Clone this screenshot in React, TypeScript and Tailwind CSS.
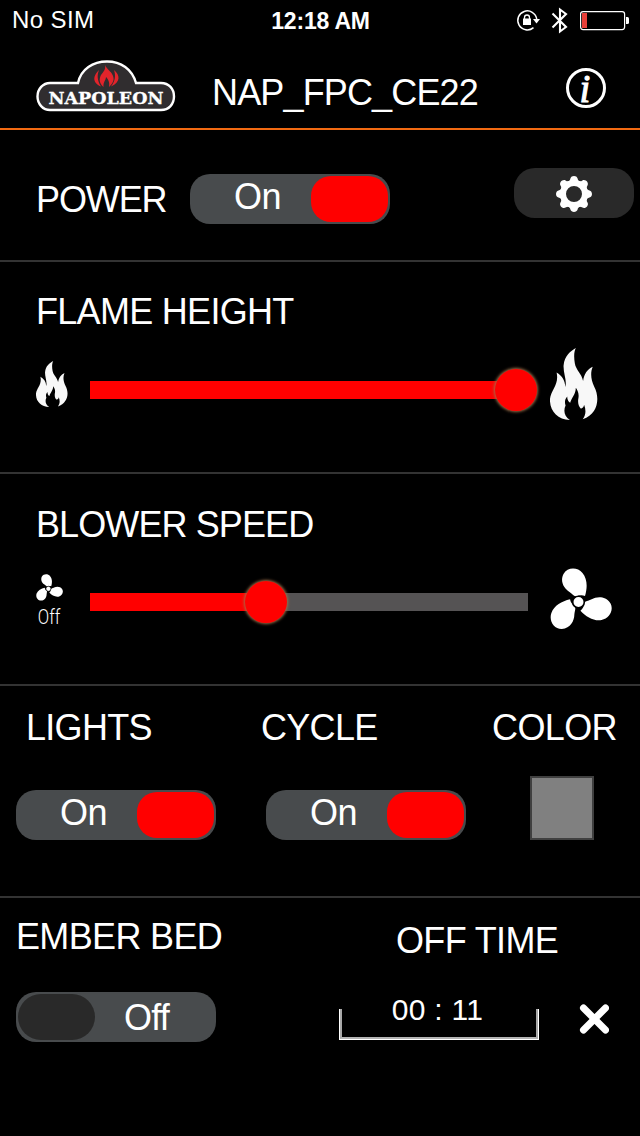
import { useState } from 'react';
import type { ReactNode } from 'react';
import clsx from 'clsx';

function Label({ children, className }: { children: ReactNode; className?: string }) {
  return (
    <div className={clsx('text-[36px] leading-[36px] whitespace-nowrap', className)}>
      {children}
    </div>
  );
}

function Toggle({ initial }: { initial: boolean }) {
  const [on, setOn] = useState(initial);

  return (
    <button
      onClick={() => setOn(!on)}
      className={clsx(
        'flex h-[50px] w-[200px] shrink-0 items-center rounded-[20px] bg-[#484b4d] p-0.5',
        !on && 'flex-row-reverse'
      )}
    >
      <span
        className={clsx(
          'flex-1 text-center text-[36px] leading-[36px]',
          on ? 'pb-1 pl-3 tracking-[-0.5px]' : 'pt-0.5 pr-4 tracking-[-0.8px]'
        )}
      >
        {on ? 'On' : 'Off'}
      </span>
      <span
        className={clsx(
          'h-[46px] w-[77px]',
          on ? 'rounded-[20px] bg-[#ff0000]' : 'rounded-[23px] bg-[#292929]'
        )}
      />
    </button>
  );
}

function Slider({ value }: { value: number }) {
  return (
    <div className="relative h-[18px] w-[438px] bg-[#555354]">
      <div className="h-full bg-[#ff0000]" style={{ width: `${value}px` }} />
      <div
        className="absolute -top-3 size-[42px] -translate-x-1/2 rounded-full bg-[#ff0000] shadow-[0_0_3px_1px_#a0704a]"
        style={{ left: `${value}px` }}
      />
    </div>
  );
}

function Flame({ className }: { className?: string }) {
  return (
    <svg viewBox="240 55 145 214" preserveAspectRatio="none" fill="#f8f8f8" className={className}>
      <path d="M318 55C312 66 312 83 315 100C318 120 336 131 340 153C343 132 353 118 369 111C361 130 364 151 374 171C391 203 386 251 339 267C349 252 349 239 343 224C342 232 337 236 332 234C326 228 323 215 326 203C328 190 323 179 318 173C318 192 304 205 301 218C295 215 292 207 292 199C284 208 284 217 287 226C280 241 283 258 300 269C262 268 238 241 240 206C243 180 268 164 260 128C276 137 286 152 286 171C292 152 280 131 281 107C284 77 302 65 318 55Z" />
    </svg>
  );
}

function Fan({ className }: { className?: string }) {
  const blade = 'M6.5 -6C9 -14 9 -23 4 -29C-1 -35 -11 -35 -15 -28C-19 -20 -14 -13 -9 -10C-6 -8 -4 -5 -2 -5.5C1 -7 4 -7 6.5 -6Z';

  return (
    <svg viewBox="-28.5 -34 62 62" fill="white" className={className}>
      <path d={blade} />
      <path d={blade} transform="rotate(120)" />
      <path d={blade} transform="rotate(240)" />
      <circle r="5.8" stroke="black" strokeWidth="1.6" />
    </svg>
  );
}

function Gear() {
  return (
    <svg viewBox="-18 -18 36 36" className="size-9 fill-white">
      <circle r="11" fill="none" stroke="white" strokeWidth="6" />
      {[0, 45, 90, 135, 180, 225, 270, 315].map((angle) => (
        <path
          key={angle}
          transform={`rotate(${angle})`}
          d="M-6.5 -12C-4.8 -13 -4 -13.5 -3.6 -15.5C-2.8 -18.8 2.8 -18.8 3.6 -15.5C4 -13.5 4.8 -13 6.5 -12Z"
        />
      ))}
    </svg>
  );
}

function Logo() {
  return (
    <svg viewBox="36 60 140 52" className="h-[52px] w-[140px]">
      <path
        d="M50 83H78C81 69 93 61.5 107 61.5C121 61.5 132 69 136 83H161C169 83 174 89 174 96.5C174 104 169 110 161 110H50C43 110 37.500 104 37.500 96.5C37.500 89 43 83 50 83Z"
        fill="#302d2f"
        stroke="white"
        strokeWidth="2.4"
      />
      <path
        d="M105 65C107 70 113 72 113.500 78C114 82 111 85 109 87C110 82 108 79 106 77C106 80 103 82 103.500 87C99 83 99 79 101 75C103 72 106 70 105 65Z"
        fill="#e2242b"
      />
      <path d="M99 70C94 75 91 82 101 86.500C97 80 97 75 99 70Z" fill="#e2242b" />
      <path d="M114 70C120 75 121 82 111 86.500C115 81 116 76 114 70Z" fill="#e2242b" />
      <text
        x="48.500"
        y="103.500"
        textLength="115"
        lengthAdjust="spacingAndGlyphs"
        fill="white"
        stroke="white"
        strokeWidth="0.3"
        className="font-['DejaVu_Serif',serif] text-[17px] font-bold"
      >
        NAPOLEON
      </text>
    </svg>
  );
}

function StatusBar() {
  return (
    <div className="grid h-10 grid-cols-[1fr_auto_1fr] items-center pr-[11px] pl-3">
      <span className="text-[24px] leading-6 tracking-[0.4px]">No SIM</span>
      <span className="pt-px text-[23px] leading-6 font-bold tracking-[-0.2px]">12:18 AM</span>
      <svg viewBox="515 0 114 40" className="h-10 w-[114px] justify-self-end" fill="none" stroke="white">
        {/* Rotation lock */}
        <path d="M533.500 27.600A9.500 9.500 0 1 1 536.700 19" strokeWidth="1.500" />
        <path d="M533 19H540L536.500 23.500Z" fill="white" stroke="none" />
        <path d="M523 18.500H531V25H523Z" fill="white" stroke="none" />
        <path d="M524.500 19V17.500A2.500 2.500 0 0 1 529.500 17.500V19" strokeWidth="1.300" />
        {/* Bluetooth */}
        <path d="M552.500 13.500L566 27L560 31.500V9.500L566 14L552.500 27.500" strokeWidth="2.100" />
        {/* Battery */}
        <rect x="580.600" y="11.600" width="44" height="18" rx="2.500" strokeWidth="1.200" />
        <rect x="582" y="13" width="5" height="15" fill="#e8403a" stroke="none" />
        <path d="M626 17H627.500Q629 17 629 18.500V22.500Q629 24 627.500 24H626Z" fill="white" stroke="none" />
      </svg>
    </div>
  );
}

export default function App() {
  return (
    <div className="h-[1136px] w-[640px] overflow-hidden bg-black font-['Liberation_Sans',Arial,sans-serif] text-white">
      <StatusBar />

      <header className="flex h-[90px] border-b-2 border-[#f26a12] pl-9">
        <div className="pt-5">
          <Logo />
        </div>
        <Label className="ml-9 w-[354px] pt-[35px] tracking-[-0.85px]">NAP_FPC_CE22</Label>
        <div className="mt-7 flex size-10 items-center justify-center rounded-full border-3 border-white pr-0.5 font-['Liberation_Serif',serif] text-[39px] leading-[39px] italic">
          <span className="[-webkit-text-stroke:1px_white]">i</span>
        </div>
      </header>

      {/* Power */}
      <section className="flex h-[132px] border-b-2 border-[#333333] pl-9">
        <Label className="w-[154px] pt-[52px] tracking-[-1.1px]">POWER</Label>
        <div className="pt-11">
          <Toggle initial={true} />
        </div>
        <button className="mt-[38px] ml-[124px] flex h-[50px] w-[120px] items-center justify-center rounded-[21px] bg-[#292929] pt-0.5">
          <Gear />
        </button>
      </section>

      {/* Flame height */}
      <section className="h-[212px] border-b-2 border-[#333333] px-9 pt-8">
        <Label className="tracking-[-0.7px]">FLAME HEIGHT</Label>
        <div className="mt-[18px] flex h-[72px] items-center">
          <Flame className="mr-[22px] h-[46px] w-8" />
          <div className="mt-3">
            <Slider value={426} />
          </div>
          <Flame className="ml-[22px] h-[72px] w-12" />
        </div>
      </section>

      {/* Blower speed */}
      <section className="h-[212px] border-b-2 border-[#333333] pt-[33px] pl-9">
        <Label className="tracking-[-0.9px]">BLOWER SPEED</Label>
        <div className="mt-[25px] flex h-[62px] items-start">
          <div className="mt-1.5 mr-7 flex w-[26px] flex-col items-center">
            <Fan className="size-[27px]" />
            <span className="mt-1.5 scale-x-[0.8] font-[Roboto,sans-serif] text-[21px] leading-5 font-light">Off</span>
          </div>
          <div className="mt-[25px]">
            <Slider value={176} />
          </div>
          <Fan className="ml-[22px] size-[62px]" />
        </div>
      </section>

      {/* Lights, cycle and color */}
      <section className="flex h-[212px] border-b-2 border-[#333333] pt-6 pl-4">
        <div className="w-[250px]">
          <Label className="pl-2.5 tracking-[-0.7px]">LIGHTS</Label>
          <div className="mt-11">
            <Toggle initial={true} />
          </div>
        </div>
        <div className="w-[225px]">
          <Label className="-ml-[5px] tracking-[-0.7px]">CYCLE</Label>
          <div className="mt-11">
            <Toggle initial={true} />
          </div>
        </div>
        <div>
          <Label className="pl-px tracking-[-0.6px]">COLOR</Label>
          <button className="mt-[30px] ml-[39px] block size-16 border-2 border-[#404040] bg-[#808080]" />
        </div>
      </section>

      {/* Ember bed and off timer */}
      <section className="flex pl-4">
        <div className="w-[323px] pt-[21px]">
          <Label className="tracking-[-0.65px]">EMBER BED</Label>
          <div className="mt-[37px]">
            <Toggle initial={false} />
          </div>
        </div>
        <div className="w-[200px] pt-[25px]">
          <Label className="pl-[57px] tracking-[-0.65px]">OFF TIME</Label>
          <div className="mt-9 h-[46px] text-center text-[30px] leading-[30px]">
            <div className="h-3.5 pr-[3px] tracking-[0.3px]">00 : 11</div>
            <div className="h-[31px] border border-t-0 border-white">
              <div className="h-full border-2 border-t-0 border-x-[#a8a8a8] border-b-[#b4b4b4]" />
            </div>
          </div>
        </div>
        <button className="mt-[106px] ml-10 size-[30px]">
          <svg viewBox="-15.5 -15 30 30" stroke="white" strokeWidth="7" strokeLinecap="round">
            <path d="M-11 -11L11 11M11 -11L-11 11" />
          </svg>
        </button>
      </section>
    </div>
  );
}
